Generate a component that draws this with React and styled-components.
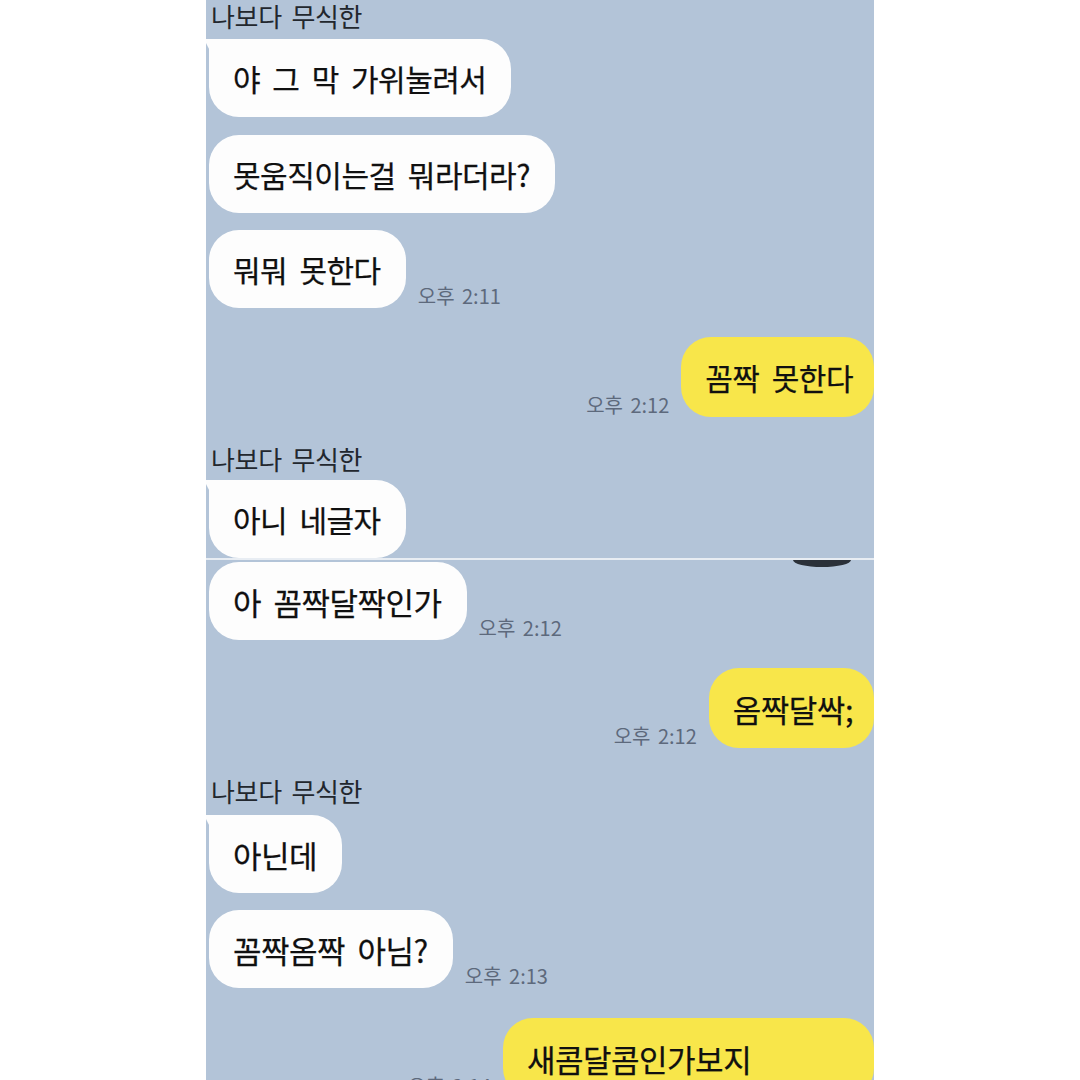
import React from 'react';
import styled, { createGlobalStyle } from 'styled-components';

const GlobalStyle = createGlobalStyle`
  html, body {
    margin: 0;
    padding: 0;
    background: #ffffff;
  }
  body {
    font-family: "Noto Sans CJK KR", "Noto Sans", sans-serif;
  }
`;

const Page = styled.div`
  width: 1080px;
  height: 1080px;
  display: flex;
  justify-content: center;
  background: #ffffff;
`;

const Panel = styled.main`
  width: 668px;
  height: 1080px;
  background: #b3c4d8;
  display: flex;
  flex-direction: column;
  overflow: hidden;
`;

// each stacked screenshot has a slightly different zoom level
const Shot = styled.section`
  --msg-size: ${p => p.$fs}px;
  position: relative;
  height: ${p => p.$h}px;
  flex: none;
  display: flex;
  flex-direction: column;
  overflow: hidden;
`;

const Divider = styled.hr`
  margin: 0;
  border: 0;
  height: 2px;
  flex: none;
  background: #e8edf3;
`;

const Name = styled.div`
  margin: ${p => p.$mt}px 0 0 5px;
  font-size: 26px;
  line-height: 32px;
  letter-spacing: -0.3px;
  word-spacing: 4px;
  color: #22272e;
  white-space: nowrap;
`;

const Row = styled.div`
  display: flex;
  align-items: flex-end;
  gap: 12px;
  flex: none;
  margin-top: ${p => p.$mt}px;
  padding-left: 3px;
  justify-content: ${p => (p.$mine ? 'flex-end' : 'flex-start')};
`;

const Bubble = styled.div`
  position: relative;
  height: ${p => (p.$mine ? 80 : 78)}px;
  min-width: ${p => p.$minW || 0}px;
  box-sizing: border-box;
  display: flex;
  align-items: center;
  padding: 0 ${p => (p.$mine ? 21 : 25)}px 0 24px;
  border-radius: 30px;
  background: ${p => (p.$mine ? '#f8e64a' : '#fdfdfd')};
  color: #101010;
  font-size: var(--msg-size, 30px);
  letter-spacing: -0.5px;
  word-spacing: 6px;
  -webkit-text-stroke: 0.25px #101010;
  white-space: nowrap;
  ${p =>
    p.$tail &&
    `
    border-top-left-radius: 8px;
    &::before {
      content: '';
      position: absolute;
      left: -5px;
      top: 0;
      width: 18px;
      height: 16px;
      background: #fdfdfd;
      clip-path: polygon(0 0, 100% 0, 45% 100%);
    }
  `}
`;

const Time = styled.span`
  font-size: 20px;
  line-height: 22px;
  word-spacing: 3px;
  color: #5d697c;
  white-space: nowrap;
  margin-bottom: 1px;
`;

const Remnant = styled.div`
  position: absolute;
  top: 0;
  right: 23px;
  width: 58px;
  height: 7px;
  background: #2b3139;
  border-radius: 0 0 29px 29px / 0 0 7px 7px;
`;

const Msg = ({ mt, mine, tail, time, minW, children }) => (
  <Row $mt={mt} $mine={mine}>
    {mine && time && <Time>{time}</Time>}
    <Bubble $mine={mine} $tail={tail} $minW={minW}>
      {children}
    </Bubble>
    {!mine && time && <Time>{time}</Time>}
  </Row>
);

export default function App() {
  return (
    <>
      <GlobalStyle />
      <Page>
        <Panel>
          <Shot $h={558} $fs={30}>
            <Name $mt={0}>나보다 무식한</Name>
            <Msg mt={7} tail>야 그 막 가위눌려서</Msg>
            <Msg mt={18}>못움직이는걸 뭐라더라?</Msg>
            <Msg mt={17} time="오후 2:11">뭐뭐 못한다</Msg>
            <Msg mt={29} mine time="오후 2:12">꼼짝 못한다</Msg>
            <Name $mt={26}>나보다 무식한</Name>
            <Msg mt={5} tail>아니 네글자</Msg>
          </Shot>
          <Divider />
          <Shot $h={520} $fs={31}>
            <Remnant />
            <Msg mt={2} time="오후 2:12">아 꼼짝달짝인가</Msg>
            <Msg mt={28} mine time="오후 2:12">옴짝달싹;</Msg>
            <Name $mt={27}>나보다 무식한</Name>
            <Msg mt={8} tail>아닌데</Msg>
            <Msg mt={17} time="오후 2:13">꼼짝옴짝 아님?</Msg>
            <Msg mt={30} mine time="오후 2:14" minW={371}>새콤달콤인가보지</Msg>
          </Shot>
        </Panel>
      </Page>
    </>
  );
}
